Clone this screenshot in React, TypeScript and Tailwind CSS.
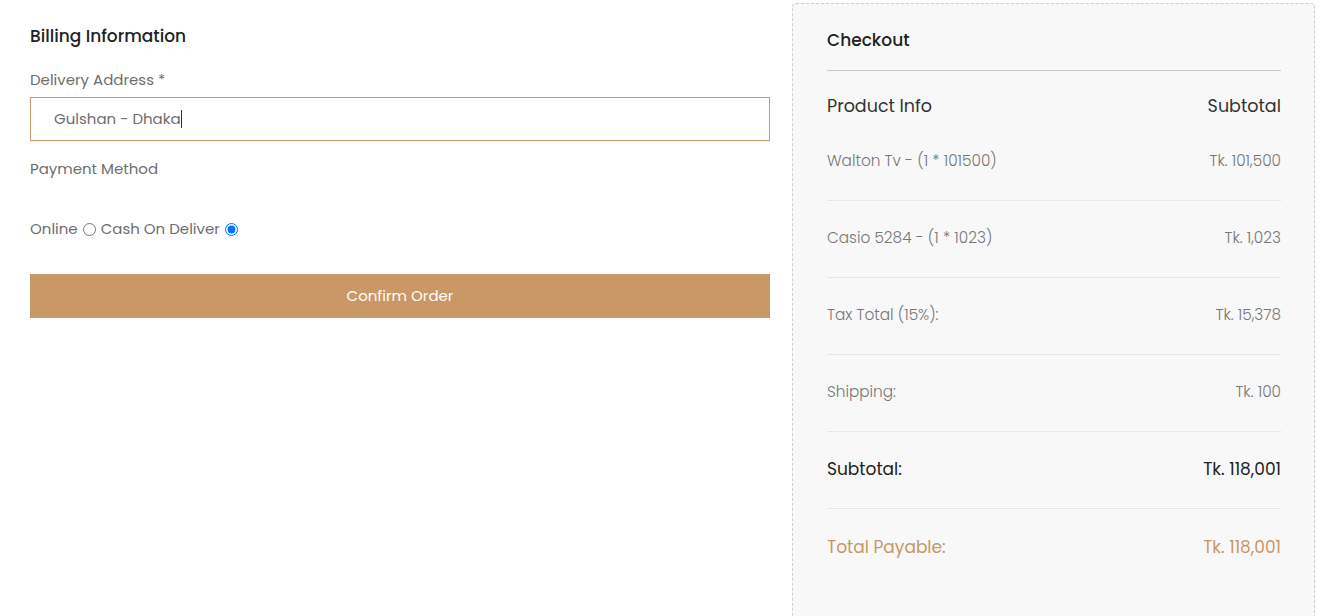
import React from "react";

const rows = [
  { l: "Walton Tv - (1 * 101500)", r: "Tk. 101,500" },
  { l: "Casio 5284 - (1 * 1023)", r: "Tk. 1,023" },
  { l: "Tax Total (15%):", r: "Tk. 15,378" },
  { l: "Shipping:", r: "Tk. 100" },
];

export default function App() {
  return (
    <div
      className="w-[1341px] h-[616px] overflow-hidden bg-white flex pl-[30px] pt-[3px] gap-[22px]"
      style={{ fontFamily: "Poppins, 'Open Sans', sans-serif" }}
    >
      <div className="w-[740px] flex flex-col pt-[20px]">
        <h2 className="text-[17px] leading-[26px] font-medium text-[#222]">Billing Information</h2>
        <label className="mt-[20px] text-[15px] leading-[22px] text-[#6e6e6e]">Delivery Address *</label>
        <div className="mt-[6px] h-[44px] border border-[#cc9966] flex items-center pl-[23px] text-[15px] text-[#6e6e6e]">
          <span>Gulshan - Dhaka</span>
          <span className="inline-block w-px h-[18px] bg-[#333]" />
        </div>
        <div className="mt-[17px] text-[15px] leading-[22px] text-[#6e6e6e]">Payment Method</div>
        <div className="mt-[38px] flex items-center text-[15px] leading-[22px] text-[#6e6e6e]">
          <span>Online</span>
          <input type="radio" name="pm" className="ml-[5px] mr-[5px] w-[13px] h-[13px]" readOnly />
          <span>Cash On Deliver</span>
          <input type="radio" name="pm" defaultChecked className="ml-[5px] w-[13px] h-[13px]" />
        </div>
        <button className="mt-[34px] h-[44px] w-full bg-[#ca9766] text-white text-[15px]">Confirm Order</button>
      </div>
      <div className="w-[523px] h-[640px] border border-dashed border-[#cfcfcf] rounded-[4px] bg-[#f8f8f8] pl-[34px] pr-[33px] pt-[23px]">
        <div className="text-[17px] leading-[26px] font-medium text-[#222] pb-[17px] border-b border-[#c8c8c8]">Checkout</div>
        <div className="flex justify-between items-center pt-[22px] pb-[5px] leading-[26px] text-[17.5px] text-[#333]">
          <span>Product Info</span>
          <span>Subtotal</span>
        </div>
        {rows.map((r) => (
          <div
            key={r.l}
            className="flex justify-between items-center h-[77px] pb-[2px] text-[15.3px] font-light text-[#777] border-b border-[#e6e6e6]"
          >
            <span>{r.l}</span>
            <span>{r.r}</span>
          </div>
        ))}
        <div className="flex justify-between items-center h-[77px] text-[17px] text-[#222] border-b border-[#e6e6e6]">
          <span>Subtotal:</span>
          <span>Tk. 118,001</span>
        </div>
        <div className="flex justify-between items-center h-[77px] text-[17px] text-[#c99765]">
          <span>Total Payable:</span>
          <span>Tk. 118,001</span>
        </div>
      </div>
    </div>
  );
}
